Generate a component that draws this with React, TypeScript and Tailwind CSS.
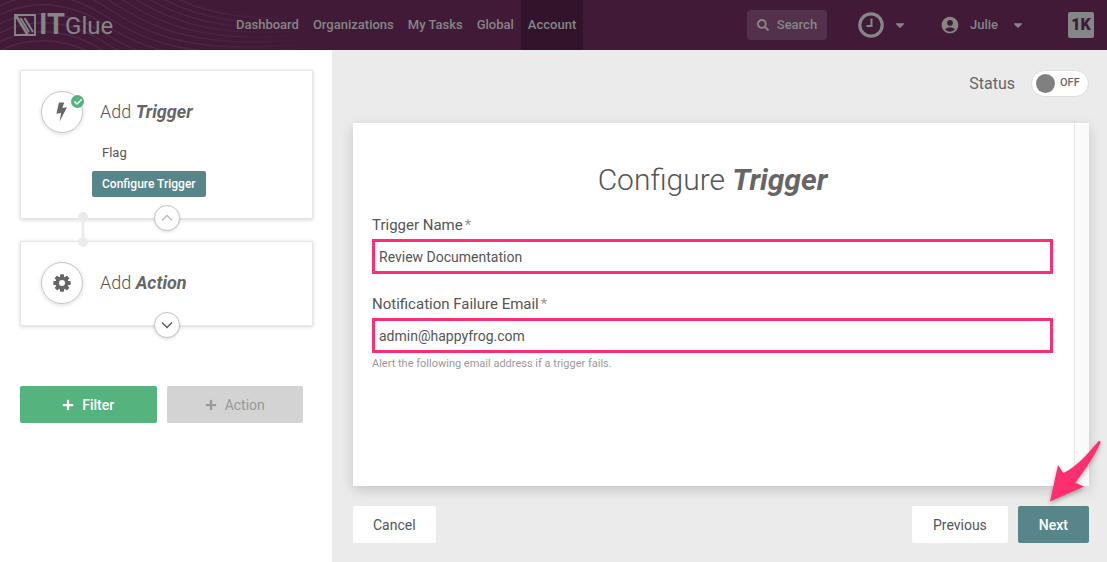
import { FC, ReactNode, useState } from "react";
import { FaCaretDown, FaCheck, FaPlus, FaSearch } from "react-icons/fa";
import { MdAccountCircle } from "react-icons/md";

const navLinks = [
  { label: "Dashboard", active: false },
  { label: "Organizations", active: false },
  { label: "My Tasks", active: false },
  { label: "Global", active: false },
  { label: "Account", active: true },
];

const waveOffsets = [-70, -61, -52, -43, -34, -25, -16, -7, 2, 11, 20, 29, 38];

const Waves: FC = () => (
  <svg
    className="pointer-events-none absolute left-0 top-0"
    width="332"
    height="50"
    viewBox="0 0 332 50"
    fill="none"
    stroke="url(#wave-fade)"
    strokeWidth="1.3"
    aria-hidden="true"
  >
    <defs>
      <linearGradient id="wave-fade" gradientUnits="userSpaceOnUse" x1="0" y1="0" x2="310" y2="0">
        <stop offset="0" stopColor="#4e2746" />
        <stop offset="0.6" stopColor="#4e2746" />
        <stop offset="1" stopColor="#401a37" />
      </linearGradient>
    </defs>
    {waveOffsets.map((y) => (
      <path key={y} d={`M-10 ${y + 18}C20 ${y} 60 ${y - 6} 104 ${y + 22}S190 ${y * 0.5 + 66} 320 ${y * 0.5 + 50}`} />
    ))}
  </svg>
);

const Logo: FC = () => (
  <a href="#" className="flex items-center gap-[3px] text-[#868686]">
    <svg width="22" height="22" viewBox="0 0 22 22" fill="none" stroke="currentColor" aria-hidden="true">
      <path d="M1 1H21V21H1Z" strokeWidth="1.8" />
      <path d="M1.5 1L13.5 20.5" strokeWidth="2.6" />
      <path d="M6.5 4L15 18M10.5 4L19 18" strokeWidth="2" />
    </svg>
    <span className="flex items-baseline text-[29px] leading-8">
      <b>IT</b>
      <span className="text-2xl leading-8 font-normal">Glue</span>
    </span>
  </a>
);

const Header: FC = () => (
  <header className="relative flex h-[50px] items-center bg-[#401a37] text-[13px] font-medium text-[#868686]">
    <Waves />
    <div className="relative w-[229px] shrink-0 pl-[14px]">
      <Logo />
    </div>
    <nav className="relative flex h-full">
      {navLinks.map((link) => (
        <a
          key={link.label}
          href="#"
          className={
            link.active
              ? "flex items-center bg-[#31142b] px-[7px] whitespace-nowrap"
              : "flex items-center px-[7px] whitespace-nowrap"
          }
        >
          {link.label}
        </a>
      ))}
    </nav>
    <div className="relative ml-auto flex items-center pr-[13px]">
      <button className="mr-[31px] flex h-[30px] w-20 items-center justify-center gap-2 rounded bg-[#53314b]">
        <FaSearch size={12} />
        Search
      </button>
      <button className="mr-[33px] flex items-center gap-[9px]" aria-label="Recent">
        <svg width="26" height="26" viewBox="0 0 26 26" fill="none" stroke="currentColor" aria-hidden="true">
          <circle cx="13" cy="13" r="11.2" strokeWidth="3.2" />
          <path d="M13.5 6.5V14H8.5" strokeWidth="2" />
        </svg>
        <FaCaretDown size={14} />
      </button>
      <button className="mr-[43px] flex items-center">
        <MdAccountCircle size={20} className="mr-[10px]" />
        Julie
        <FaCaretDown size={14} className="ml-[13px]" />
      </button>
      <a
        href="#"
        className="flex size-[26px] items-center justify-center rounded-xs bg-[#868686] text-base font-black text-[#401a37]"
      >
        1K
      </a>
    </div>
  </header>
);

const BoltIcon: FC = () => (
  <svg width="12" height="20" viewBox="0 0 12 20" fill="currentColor" aria-hidden="true">
    <path d="M3 .5H8.2L6.4 6L11 5.3L3.6 19.5L5.1 11L.4 11.8Z" />
  </svg>
);

const GearIcon: FC = () => (
  <svg width="18" height="18" viewBox="-9 -9 18 18" aria-hidden="true">
    {[0, 45, 90, 135].map((angle) => (
      <rect key={angle} x="-2" y="-8.7" width="4" height="17.4" rx="0.8" fill="currentColor" transform={`rotate(${angle})`} />
    ))}
    <circle r="6.6" fill="currentColor" />
    <circle r="3" fill="#fff" />
  </svg>
);

interface StepCardProps {
  name: string;
  icon: ReactNode;
  done?: boolean;
  open?: boolean;
  children?: ReactNode;
}

const StepCard: FC<StepCardProps> = ({ name, icon, done, open, children }) => (
  <section className="relative border border-[#e6e6e6] bg-white px-5 pt-5 pb-[21px] shadow-[0_1px_4px_rgba(0,0,0,0.16)]">
    <div className="flex items-center gap-[17px]">
      <div className="relative flex size-[42px] items-center justify-center rounded-full border border-[#c6c6c6] text-[#666] shadow-[0_1px_4px_rgba(0,0,0,0.15)]">
        {icon}
        {done && (
          <span className="absolute -right-[2px] top-[3px] flex size-[13px] items-center justify-center rounded-full bg-[#55b47e] text-white">
            <FaCheck size={8} />
          </span>
        )}
      </div>
      <h2 className="text-lg font-light text-[#555]">
        Add <em className="font-bold text-[#666]">{name}</em>
      </h2>
    </div>
    {children}
    <button
      aria-label={name}
      className="absolute -bottom-[13px] left-1/2 flex size-[26px] -translate-x-1/2 items-center justify-center rounded-full border border-[#c6c6c6] bg-white shadow-[0_1px_3px_rgba(0,0,0,0.15)]"
    >
      <svg width="12" height="8" viewBox="0 0 12 8" fill="none" strokeWidth="1.3" aria-hidden="true">
        {open ? <path d="M1 6.5L6 1.5L11 6.5" stroke="#bbb" /> : <path d="M1 1.5L6 6.5L11 1.5" stroke="#555" />}
      </svg>
    </button>
  </section>
);

const Sidebar: FC = () => (
  <aside className="w-[332px] shrink-0 bg-white pt-5 pr-[19px] pl-5">
    <div className="relative flex flex-col gap-[22px]">
      <StepCard name="Trigger" icon={<BoltIcon />} done open>
        <div className="mt-2 flex flex-col items-start pl-[51px]">
          <span className="px-[10px] text-[13px] leading-6 text-[#555]">Flag</span>
          <button className="mt-[6px] h-[26px] rounded-xs bg-[#588589] px-[10px] text-xs font-medium text-white">
            Configure Trigger
          </button>
        </div>
      </StepCard>
      <StepCard name="Action" icon={<GearIcon />} />
      <svg className="absolute left-[58px] top-[142px]" width="10" height="35" viewBox="0 0 10 35" fill="#ebebeb" aria-hidden="true">
        <circle cx="5" cy="5" r="5" />
        <circle cx="5" cy="30" r="5" />
        <rect x="3.5" y="5" width="3" height="25" />
      </svg>
    </div>
    <div className="mt-[60px] flex gap-[10px] pr-[10px] text-sm">
      <button className="flex h-[37px] flex-1 items-center justify-center gap-2 rounded-xs bg-[#55b47e] font-medium text-white">
        <FaPlus size={12} />
        Filter
      </button>
      <button className="flex h-[37px] flex-1 items-center justify-center gap-2 rounded-xs bg-[#d3d3d3] text-[#999]">
        <FaPlus size={12} />
        Action
      </button>
    </div>
  </aside>
);

interface FieldProps {
  id: string;
  label: string;
  type: string;
  defaultValue: string;
  hint?: string;
}

const Field: FC<FieldProps> = ({ id, label, type, defaultValue, hint }) => (
  <div className="flex flex-col">
    <label htmlFor={id} className="mb-1 text-[15px] leading-5 text-[#555]">
      {label}
      <span className="ml-[2px] text-[#999]">*</span>
    </label>
    <input
      id={id}
      type={type}
      defaultValue={defaultValue}
      className="h-[35px] w-full border-3 border-[#fd2f70] bg-white px-1 text-sm text-[#555] outline-none"
    />
    {hint && <p className="mt-[3px] text-[11px] leading-4 text-[#999]">{hint}</p>}
  </div>
);

const Arrow: FC = () => (
  <svg
    className="pointer-events-none absolute -right-4 bottom-full drop-shadow-[0_2px_2px_rgba(0,0,0,0.3)]"
    width="60"
    height="70"
    viewBox="1045 436 60 70"
    aria-hidden="true"
  >
    <path
      d="M1098.5 441.2Q1100.8 440.5 1100.4 443C1094 457 1085 470 1075.3 482.7L1084 486.5L1050 501.5L1058 465L1063.3 473C1078 466 1088 453 1098.5 441.2Z"
      fill="#fd2f70"
    />
  </svg>
);

const App: FC = () => {
  const [enabled, setEnabled] = useState(false);

  return (
    <div className="flex min-h-screen flex-col font-[Roboto,sans-serif]">
      <Header />
      <div className="flex flex-1">
        <Sidebar />
        <main className="flex min-w-0 flex-1 flex-col bg-[#ebebeb] pt-5 pr-[18px] pb-[19px] pl-[21px]">
          <label className="flex cursor-pointer items-center justify-end gap-4 text-base text-[#666]">
            Status
            <input
              type="checkbox"
              role="switch"
              className="peer sr-only"
              checked={enabled}
              onChange={(e) => setEnabled(e.target.checked)}
            />
            <span className="flex h-[27px] w-[58px] items-center gap-[5px] rounded-full border border-[#ddd] bg-white pl-1 text-[11px] font-medium">
              <span className="size-[19px] rounded-full bg-[#808080]" />
              {enabled ? "ON" : "OFF"}
            </span>
          </label>

          <div className="mt-[26px] flex flex-1 bg-[#fafafa] shadow-[0_4px_12px_rgba(0,0,0,0.16)]">
            <form className="flex-1 border-r border-[#e4e4e4] bg-white pt-[37px] pr-[21px] pl-[19px]">
              <h1 className="text-center text-3xl leading-10 font-light text-[#555]">
                Configure <em className="font-bold text-[#666]">Trigger</em>
              </h1>
              <div className="mt-[15px] flex flex-col gap-5">
                <Field id="trigger-name" label="Trigger Name" type="text" defaultValue="Review Documentation" />
                <Field
                  id="failure-email"
                  label="Notification Failure Email"
                  type="email"
                  defaultValue="admin@happyfrog.com"
                  hint="Alert the following email address if a trigger fails."
                />
              </div>
            </form>
            <div className="w-[14px]" />
          </div>

          <div className="mt-5 flex items-center gap-[10px] text-sm text-[#555]">
            <button className="mr-auto h-[37px] rounded-xs bg-white px-5">Cancel</button>
            <button className="h-[37px] rounded-xs bg-white px-[21px]">Previous</button>
            <div className="relative">
              <button className="h-[37px] rounded-xs bg-[#588589] px-[21px] font-medium text-white">Next</button>
              <Arrow />
            </div>
          </div>
        </main>
      </div>
    </div>
  );
};

export default App;
